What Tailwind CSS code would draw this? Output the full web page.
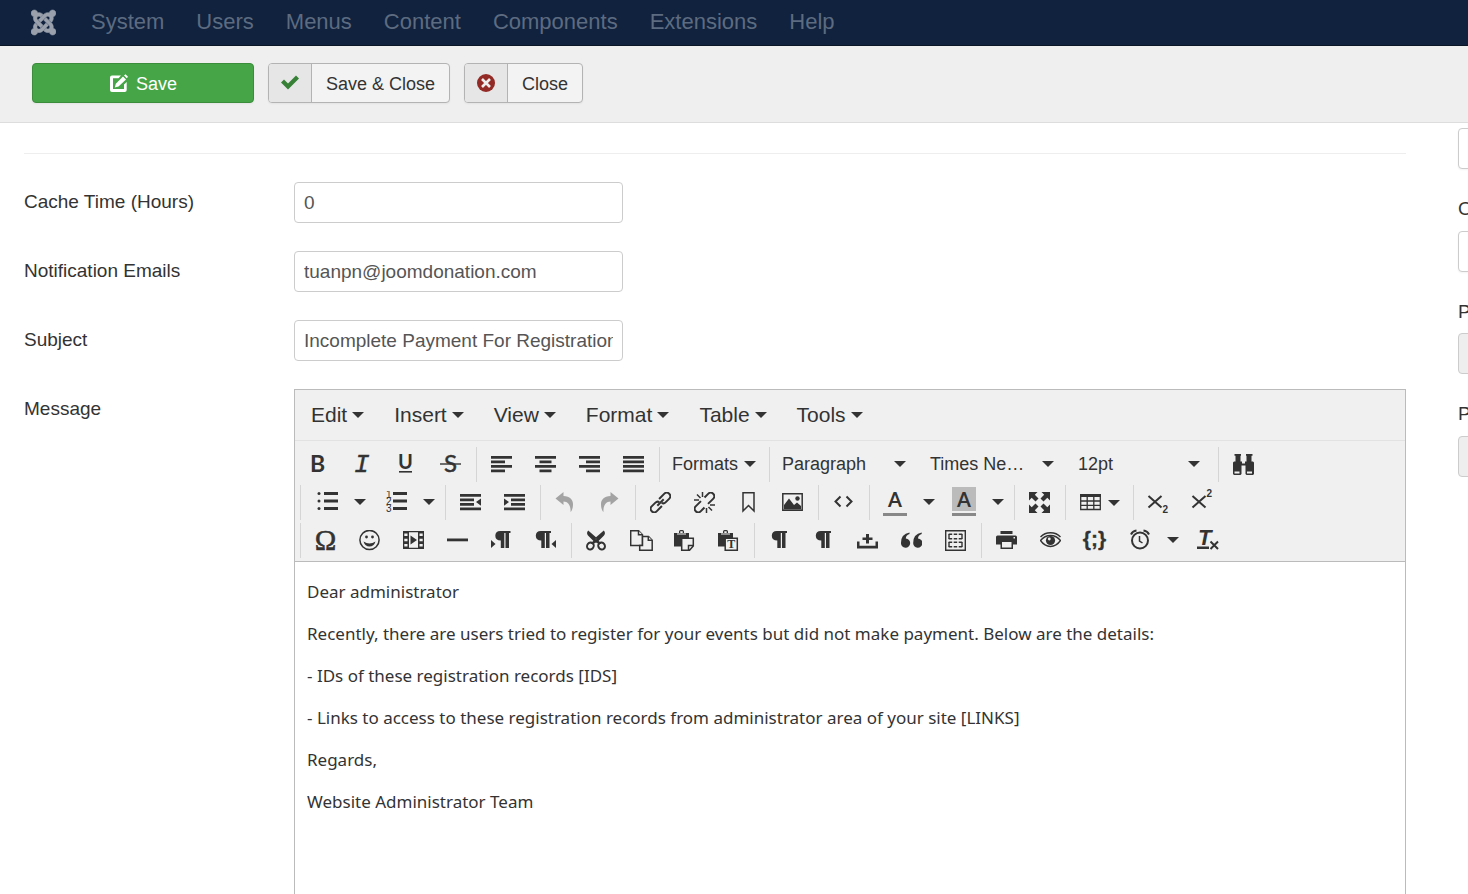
<!DOCTYPE html>
<html lang="en">
<head>
<meta charset="utf-8">
<meta name="viewport" content="width=device-width, initial-scale=1">
<title>Plugin configuration</title>
<script src="https://cdn.jsdelivr.net/npm/@tailwindcss/browser@4"></script>
</head>
<body class="h-screen overflow-hidden bg-white font-['Liberation_Sans',Arial,sans-serif] text-[#333]">

<!-- Editor icon set, drawn on a 21 unit grid -->
<svg class="hidden" aria-hidden="true">
  <symbol id="caret" viewBox="0 0 12 6"><path d="M0 0H12L6 6Z"/></symbol>
  <symbol id="bold" viewBox="0 0 21 21"><text x="2" y="18" font-family="Lato" font-weight="700" font-size="23">B</text></symbol>
  <symbol id="italic" viewBox="0 0 21 21"><text x="2" y="18" font-family="Liberation Mono" font-weight="400" font-style="italic" font-size="26" stroke="currentColor" stroke-width=".4">I</text></symbol>
  <symbol id="underline" viewBox="0 0 21 21"><text x="2" y="15" font-family="Lato" font-weight="700" font-size="20">U</text><path d="M3 17H16V18.6H3Z"/></symbol>
  <symbol id="strike" viewBox="0 0 21 21"><text x="4" y="18" font-family="Lato" font-weight="400" font-size="24" stroke="currentColor" stroke-width=".5">S</text><path d="M0 9.300H21V10.700H0Z"/></symbol>
  <symbol id="al" viewBox="0 0 21 21"><path d="M0 2H21V4.8H0ZM0 6.5H14V9.3H0ZM0 11H21V13.8H0ZM0 15.5H14V18.3H0Z"/></symbol>
  <symbol id="ac" viewBox="0 0 21 21"><path d="M0 2H21V4.8H0ZM4.5 6.5H16.5V9.3H4.5ZM0 11H21V13.8H0ZM4.5 15.5H16.5V18.3H4.5Z"/></symbol>
  <symbol id="ar" viewBox="0 0 21 21"><path d="M0 2H21V4.8H0ZM7 6.5H21V9.3H7ZM0 11H21V13.8H0ZM7 15.5H21V18.3H7Z"/></symbol>
  <symbol id="aj" viewBox="0 0 21 21"><path d="M0 2H21V4.8H0ZM0 6.5H21V9.3H0ZM0 11H21V13.8H0ZM0 15.5H21V18.3H0Z"/></symbol>
  <symbol id="find" viewBox="0 0 21 21"><path d="M1.500 0H8V1.700H7.500V7.500H9V9.500H12V7.500H13.500V1.700H13V0H19.500V1.700H18.500V7.500H20L21 8.500V20L20 21H13.500L12.500 20V11.500H8.500V20L7.500 21H1L0 20V8.500L1 7.500H2.500V1.700H1.500Z"/><path fill="#f0f0f0" d="M1.500 17.500H6.500V19.500H1.500ZM14 17.500H19V19.500H14Z"/></symbol>
  <symbol id="ul" viewBox="0 0 21 21"><path d="M7 1H21V4H7ZM7 8.5H21V11.5H7ZM7 16H21V19H7Z"/><circle cx="2" cy="2.5" r="1.5"/><circle cx="2" cy="10" r="1.5"/><circle cx="2" cy="17.5" r="1.5"/></symbol>
  <symbol id="ol" viewBox="0 0 21 21"><path d="M7 1H21V4H7ZM7 8.5H21V11.5H7ZM7 16H21V19H7Z"/><g font-family="Liberation Sans" font-weight="400" font-size="10"><text x="0" y="6.500">1</text><text x="0" y="13.500">2</text><text x="0" y="20.500">3</text></g></symbol>
  <symbol id="outdent" viewBox="0 0 21 21"><path d="M0 2H21V4.8H0ZM0 6.5H14V9.3H0ZM0 11H14V13.8H0ZM0 15.5H21V18.3H0ZM21 6.500V13.800L16 10.1Z"/></symbol>
  <symbol id="indent" viewBox="0 0 21 21"><path d="M0 2H21V4.8H0ZM7 6.5H21V9.3H7ZM7 11H21V13.8H7ZM0 15.5H21V18.3H0ZM0 6.500V13.800L5 10.1Z"/></symbol>
  <symbol id="undo" viewBox="0 0 21 21"><path d="M.5 6.500L8.500 0V4C15 4 18 8 18 12C18 15 17.500 18 15.500 20C16 13.500 13 9.500 8.500 9.500V13Z"/></symbol>
  <symbol id="redo" viewBox="0 0 21 21"><path d="M19.500 6.500L11.500 0V4C5 4 2 8 2 12C2 15 2.500 18 4.500 20C4 13.500 7 9.500 11.500 9.500V13Z"/></symbol>
  <symbol id="link" viewBox="0 0 21 21"><g fill="none" stroke="currentColor" stroke-width="2" transform="rotate(-45 10.500 10.500)"><path d="M9 14H1.500Q-1.800 14 -1.800 10.500Q-1.800 7 1.500 7H6.500Q9.500 7 9.800 9.500M12 7H19.500Q22.800 7 22.800 10.500Q22.800 14 19.500 14H14.500Q11.500 14 11.200 11.500"/><path d="M6 10.500H15"/></g></symbol>
  <symbol id="unlink" viewBox="0 0 21 21"><g fill="none" stroke="currentColor" stroke-width="2" transform="rotate(-45 10.500 10.500)"><path d="M7 14H1.500Q-1.800 14 -1.800 10.500Q-1.800 7 1.500 7H9M12 14H19.500Q22.800 14 22.800 10.500Q22.800 7 19.500 7H14"/></g><path fill="none" stroke="currentColor" stroke-width="1.500" d="M8.500 0V5M3 2.500L6.500 6M0 8H5M12.500 21V16M18 18.500L14.500 15M21 13H16"/></symbol>
  <symbol id="bookmark" viewBox="0 0 21 21"><path fill="none" stroke="currentColor" stroke-width="1.500" d="M5 .8H16V19L10.500 13.500L5 19Z"/></symbol>
  <symbol id="image" viewBox="0 0 21 21"><path fill="none" stroke="currentColor" stroke-width="1.500" d="M.8 1.800H20.200V18.200H.8Z"/><path d="M2 17.500V13L7 6.500L12 13L15 10.500L19 14V17.500Z"/><circle cx="15.500" cy="6.500" r="2.200"/></symbol>
  <symbol id="code" viewBox="0 0 21 21"><path fill="none" stroke="currentColor" stroke-width="2" d="M7.500 4.500L2.500 9.500L7.500 14.500M13.500 4.500L18.500 9.500L13.500 14.500"/></symbol>
  <symbol id="full" viewBox="0 0 21 21"><path d="M0 0H8.500L5.800 2.700L9.500 6.500L6.500 9.500L2.700 5.800L0 8.500ZM21 0V8.500L18.300 5.800L14.500 9.500L11.500 6.500L15.200 2.700L12.500 0ZM0 21V12.500L2.700 15.200L6.500 11.500L9.500 14.500L5.800 18.300L8.500 21ZM21 21H12.500L15.200 18.300L11.500 14.500L14.500 11.500L18.300 15.200L21 12.500Z"/></symbol>
  <symbol id="table" viewBox="0 0 21 21"><path d="M0 2H21V5H0Z"/><path fill="none" stroke="currentColor" stroke-width="1.300" d="M.7 4V17.500H20.300V4M.7 9H20.300M.7 13.300H20.300M7.200 4V18M13.800 4V18"/></symbol>
  <symbol id="sub" viewBox="0 0 21 21" overflow="visible"><path fill="none" stroke="currentColor" stroke-width="2" d="M.5 4L13.500 15.500M13.500 4L.5 15.500"/><text x="14.500" y="21" font-family="Liberation Sans" font-weight="700" font-size="10">2</text></symbol>
  <symbol id="sup" viewBox="0 0 21 21" overflow="visible"><path fill="none" stroke="currentColor" stroke-width="2" d="M.5 4L13.500 15.500M13.500 4L.5 15.500"/><text x="14.500" y="5" font-family="Liberation Sans" font-weight="700" font-size="10">2</text></symbol>
  <symbol id="omega" viewBox="0 0 21 21" overflow="visible"><text x="10.500" y="19.500" text-anchor="middle" font-family="Liberation Serif" font-size="29" stroke="currentColor" stroke-width=".5">Ω</text></symbol>
  <symbol id="smile" viewBox="0 0 21 21"><circle cx="10.500" cy="10" r="9.600" fill="none" stroke="currentColor" stroke-width="1.500"/><circle cx="7.500" cy="7" r="1.400"/><circle cx="13.500" cy="7" r="1.400"/><path d="M4.500 11.500Q10.500 15.500 16.500 11.500Q15 16.500 10.500 16.500Q6 16.500 4.500 11.500Z"/></symbol>
  <symbol id="media" viewBox="0 0 21 21"><path fill-rule="evenodd" d="M0 1H21V19H0ZM6 2.300V17.700H15V2.300ZM1.300 3.500V6H4.500V3.500ZM1.300 8.700V11.300H4.500V8.700ZM1.300 14V16.500H4.500V14ZM16.500 3.500V6H19.700V3.500ZM16.500 8.700V11.300H19.700V8.700ZM16.500 14V16.500H19.700V14ZM7.500 5.500L14 10L7.500 14.500Z"/></symbol>
  <symbol id="rule" viewBox="0 0 21 21"><path d="M0 8.500H21V11.300H0Z"/></symbol>
  <symbol id="mark" viewBox="0 0 21 21"><path d="M7.800 1H18V3H16.500V18H13V3H11.800V18H8.300V10.500Q2.800 10.500 2.800 5.800Q2.800 1 7.800 1Z"/></symbol>
  <symbol id="ltr" viewBox="0 0 21 21"><path d="M9.300 1H19.500V3H18V18H14.500V3H13.300V18H9.800V10.500Q4.300 10.500 4.300 5.800Q4.300 1 9.300 1ZM0 10L4.500 14L0 18Z"/></symbol>
  <symbol id="rtl" viewBox="0 0 21 21"><path d="M5.800 1H16V3H14.500V18H11V3H9.800V18H6.300V10.500Q.8 10.500 .8 5.800Q.8 1 5.800 1ZM21 10L16.500 14L21 18Z"/></symbol>
  <symbol id="cut" viewBox="0 0 21 21"><path d="M2.200 .5L10 7.200L17.800 .5Q20 3 18 5.500L12.500 11L10 13L7.500 11L2 5.500Q0 3 2.200 .5Z"/><circle cx="10" cy="9.800" r="1" fill="#f0f0f0"/><path d="M10 8.500L15.500 13.500L13 14.500L10 12L7 14.500L4.500 13.500Z"/><g fill="none" stroke="currentColor" stroke-width="2"><ellipse cx="4.400" cy="16" rx="3.200" ry="3.600" transform="rotate(40 4.400 16)"/><ellipse cx="15.600" cy="16" rx="3.200" ry="3.600" transform="rotate(-40 15.600 16)"/></g></symbol>
  <symbol id="copy" viewBox="0 0 23 21"><g fill="#f0f0f0" stroke="currentColor" stroke-width="1.500"><path d="M.7 .7H8.500L12.500 4.700V15.500H.7Z"/><path d="M8.500 .7V4.700H12.500"/><path d="M12.500 6.500H18.500L22.200 10.200V20.300H9.700V15.500H12.500Z"/><path d="M18.300 6.500V10.300H22.200"/></g></symbol>
  <symbol id="paste" viewBox="0 0 21 21"><path d="M0 3H15V8H7V16.500H0ZM5 1.500Q5 0 6.500 0H8.500Q10 0 10 1.500V3H5Z"/><path fill="#f0f0f0" d="M6.300 1.300H8.700V3H6.300ZM3 3.500H12V4.500H3Z"/><path fill="#f0f0f0" stroke="currentColor" stroke-width="1.500" d="M7.700 8.200H19.300V16L15.500 20.300H7.700ZM14.500 20V15.500H19"/></symbol>
  <symbol id="pastetext" viewBox="0 0 21 21"><path d="M0 3H15V8H7V16.500H0ZM5 1.500Q5 0 6.500 0H8.500Q10 0 10 1.500V3H5Z"/><path fill="#f0f0f0" d="M6.300 1.300H8.700V3H6.300ZM3 3.500H12V4.500H3Z"/><path fill="#f0f0f0" stroke="currentColor" stroke-width="1.500" d="M7.200 8.200H19.300V20.300H7.200Z"/><text x="13.300" y="18.300" text-anchor="middle" font-family="Liberation Serif" font-weight="700" font-size="12">T</text></symbol>
  <symbol id="nbsp" viewBox="0 0 21 21"><path d="M0 11.500H2.500V15.800H18.500V11.500H21V18.500H0ZM9 4H12V7.500H15.500V10H12V13.500H9V10H5.500V7.500H9Z"/></symbol>
  <symbol id="quote" viewBox="0 0 21 21"><path d="M4.800 8.500A4.600 4.600 0 1 1 0 12.800Q0 4 8.500 2.500V4Q4.800 5 4.800 8.500Z"/><path d="M17 8.500A4.600 4.600 0 1 1 12.200 12.800Q12.200 4 20.700 2.500V4Q17 5 17 8.500Z"/></symbol>
  <symbol id="template" viewBox="0 0 21 21"><g fill="none" stroke="currentColor" stroke-width="1.400"><path d="M.7 .7H20.300V20.300H.7Z"/><path stroke-dasharray="3.500 1.500" d="M3.700 4.200H17.300M3.700 8.800H17.300M3.700 12.200H17.300M3.700 16.800H17.300"/><path d="M4 4V9M17 4V9M4 12V17M17 12V17"/></g></symbol>
  <symbol id="print" viewBox="0 0 21 21"><path fill-rule="evenodd" d="M4.500 1H16.500V4H4.500ZM1.500 5.500H19.500Q21 5.500 21 7V14.500H17V19H4.500V14.500H0V7Q0 5.500 1.500 5.500ZM6 12V17.500H15.500V12ZM17.500 7V8.500H19V7Z"/></symbol>
  <symbol id="eye" viewBox="0 0 21 21"><g fill="none" stroke="currentColor" stroke-width="1.500"><path d="M.5 10.500Q4.500 5.500 10.500 5.500Q16.500 5.500 20.500 10.500Q16.500 16.500 10.500 16.500Q4.500 16.500 .5 10.500Z"/><path d="M.5 7Q4.500 2.800 10.500 2.800Q16.500 2.800 20.500 7"/></g><circle cx="10.500" cy="10.500" r="4.600"/><circle cx="9.300" cy="9" r="1.400" fill="#f0f0f0"/></symbol>
  <symbol id="braces" viewBox="0 0 25 21"><text x="12.500" y="15.500" text-anchor="middle" font-family="Liberation Sans" font-weight="700" font-size="21" stroke="currentColor" stroke-width=".3">{;}</text></symbol>
  <symbol id="clock" viewBox="0 0 21 21"><g fill="none" stroke="currentColor" stroke-width="2"><circle cx="10" cy="11.500" r="8"/><path d="M1 5.500Q2.500 2 6.500 1.500M19 5.500Q17.500 2 13.500 1.500"/><path stroke-width="1.500" d="M9.500 7V12L12.500 14"/></g></symbol>
  <symbol id="clear" viewBox="0 0 21 21" overflow="visible"><text x="1" y="15" font-family="Liberation Sans" font-weight="700" font-style="italic" font-size="22">T</text><path d="M0 16.500H12V19H0Z"/><path fill="none" stroke="currentColor" stroke-width="2" d="M13.500 11.500L21 19M21 11.500L13.500 19"/></symbol>
</svg>

<header class="flex h-[46px] items-center border-b border-[#0a1526] bg-[#10223e] pl-[31px] text-[#5d6b80]">
  <a href="#" aria-label="Home" class="mr-[35px] block text-[#9aa1ad]">
    <svg class="h-[29px] w-[25px]" viewBox="0 0 448 512" fill="currentColor" stroke="currentColor" stroke-width="10"><path d="M.6 92.1C.6 58.8 27.4 32 60.4 32c30 0 54.5 21.9 59.2 50.2 32.6-7.6 67.1.6 96.5 30l-44.3 44.3c-20.500-20.500-42.600-16.300-55.400-3.500-14.300 14.300-14.300 37.900 0 52.200l99.500 99.500-44 44.300c-87.700-87.200-49.700-49.700-99.800-99.700-26.800-26.500-35-64.800-24.800-98.900C20.400 144.600.6 120.700.6 92.100zm129.500 116.400l44.300 44.300c10-10 89.700-89.700 99.700-99.800 14.300-14.300 37.600-14.300 51.900 0 12.800 12.800 17 35-3.500 55.400l44 44.300c31.200-31.200 38.500-67.600 28.900-101.200 29.200-4.100 51.900-29.200 51.900-59.500 0-33.200-26.800-60.100-59.800-60.100-30.300 0-55.400 22.500-59.500 51.600-33.800-9.900-71.700-1.500-98.300 25.100-18.300 19.100-71.100 71.500-99.600 99.900zm266.300 152.200c8.200-32.700-.9-68.500-26.300-93.900-11.800-12.200 5 4.700-99.500-99.700l-44.300 44.300 99.700 99.700c14.300 14.300 14.300 37.600 0 51.900-12.800 12.800-35 17-55.400-3.500l-44 44.300c27.600 30.200 68 38.800 102.700 28 5.500 27.400 29.700 48.100 58.900 48.100 33 0 59.800-26.800 59.800-60.100 0-30.200-22.500-55-51.600-59.100zm-84.300-53.100l-44-44.300c-87 86.400-50.400 50.400-99.700 99.800-14.300 14.300-37.600 14.300-51.900 0-13.100-13.400-16.900-35.300 3.200-55.400l-44-44.300c-30.200 30.200-38 65.200-29.500 98.300-26.700 6-46.200 29.900-46.200 58.200C0 453.200 26.800 480 59.800 480c28.600 0 52.500-19.800 58.600-46.700 32.700 8.200 68.500-.6 94.200-26 32.100-32 12.200-12.400 99.500-99.700z"/></svg>
  </a>
  <nav class="flex gap-8 pb-0.5 text-[22px] leading-[42px]">
    <a href="#">System</a><a href="#">Users</a><a href="#">Menus</a><a href="#">Content</a><a href="#">Components</a><a href="#">Extensions</a><a href="#">Help</a>
  </nav>
</header>

<div class="flex h-[77px] gap-[14px] border-b border-[#ddd] bg-[#efefef] pt-[17px] pl-8 text-lg">
  <button class="flex h-10 w-[222px] items-center justify-center gap-2 rounded border border-[#3b8c3b] bg-[#46a546] text-white shadow-xs">
    <svg class="size-[19px]" viewBox="0 0 19 19" fill="currentColor"><path d="M12 1.500L9.500 4.200H4V15H15V10.500L17.700 8V16Q17.700 18 15.700 18H3Q1 18 1 16V3.500Q1 1.500 3 1.500ZM14 2.500L17 5.500L9.500 12.500L5.800 13.500L6.800 9.800ZM15 1.500L16.500 .3L19 2.800L17.800 4.300Z"/></svg>
    <span class="pt-px">Save</span>
  </button>
  <button class="flex h-10 items-center overflow-hidden rounded border border-[#b3b3b3] bg-[#f3f3f3] shadow-xs">
    <span class="flex h-full w-[43px] items-center justify-center border-r border-[#b3b3b3] bg-[#e6e6e6] text-[#378137]"><svg class="size-[18px]" viewBox="0 0 18 18" fill="currentColor"><path d="M0 8.500L3 5.500L7 9.500L15 1.500L18 4.500L7 15.500Z"/></svg></span>
    <span class="px-[14px] pt-px">Save &amp; Close</span>
  </button>
  <button class="flex h-10 items-center overflow-hidden rounded border border-[#b3b3b3] bg-[#f3f3f3] shadow-xs">
    <span class="flex h-full w-[43px] items-center justify-center border-r border-[#b3b3b3] bg-[#e6e6e6]"><svg class="size-[18px]" viewBox="0 0 18 18"><circle cx="9" cy="9" r="9" fill="#942a25"/><path stroke="#eee" stroke-width="2.600" d="M5 5L13 13M13 5L5 13"/></svg></span>
    <span class="px-[14px] pt-px">Close</span>
  </button>
</div>

<main class="flex gap-[52px] overflow-hidden pl-6">
  <div class="min-w-0 flex-1">
    <hr class="mt-[30px] mb-7 border-[#eee]">
    <div class="flex flex-col gap-7 text-[19px]">
      <div class="flex">
        <label for="cache" class="w-[270px] leading-10">Cache Time (Hours)</label>
        <input id="cache" value="0" class="h-[41px] w-[329px] rounded border border-[#ccc] px-[9px] text-[#555]">
      </div>
      <div class="flex">
        <label for="emails" class="w-[270px] leading-10">Notification Emails</label>
        <input id="emails" value="tuanpn@joomdonation.com" class="h-[41px] w-[329px] rounded border border-[#ccc] px-[9px] text-[#555]">
      </div>
      <div class="flex">
        <label for="subject" class="w-[270px] leading-10">Subject</label>
        <input id="subject" value="Incomplete Payment For Registrations" class="h-[41px] w-[329px] rounded border border-[#ccc] px-[9px] text-[#555]">
      </div>
      <div class="flex">
        <span id="message-label" class="w-[270px] shrink-0 leading-10">Message</span>
        <div class="min-w-0 flex-1 border border-[#bbb] bg-[#f0f0f0] fill-current">
          <div class="flex h-[51px] items-center gap-[30px] border-b border-[#e2e2e2] pl-4 text-[21px]">
            <button class="flex items-center gap-[5px]">Edit<svg class="h-1.5 w-3"><use href="#caret"/></svg></button>
            <button class="flex items-center gap-[5px]">Insert<svg class="h-1.5 w-3"><use href="#caret"/></svg></button>
            <button class="flex items-center gap-[5px]">View<svg class="h-1.5 w-3"><use href="#caret"/></svg></button>
            <button class="flex items-center gap-[5px]">Format<svg class="h-1.5 w-3"><use href="#caret"/></svg></button>
            <button class="flex items-center gap-[5px]">Table<svg class="h-1.5 w-3"><use href="#caret"/></svg></button>
            <button class="flex items-center gap-[5px]">Tools<svg class="h-1.5 w-3"><use href="#caret"/></svg></button>
          </div>
          <div class="flex flex-col gap-[3px] border-b border-[#bbb] pt-1.5 pb-[3px] text-lg">
            <div class="flex h-[35px] pl-0.5">
              <div class="flex pr-[3px]">
                <button aria-label="Bold" class="w-11 pl-[11px]"><svg class="size-[21px]"><use href="#bold"/></svg></button>
                <button aria-label="Italic" class="w-11 pl-[11px]"><svg class="size-[21px]"><use href="#italic"/></svg></button>
                <button aria-label="Underline" class="w-11 pl-[11px]"><svg class="size-[21px]"><use href="#underline"/></svg></button>
                <button aria-label="Strikethrough" class="w-11 pl-[11px]"><svg class="size-[21px]"><use href="#strike"/></svg></button>
              </div>
              <div class="flex border-l border-[#d5d5d5] px-[3px]">
                <button aria-label="Align left" class="w-11 pl-[11px]"><svg class="size-[21px]"><use href="#al"/></svg></button>
                <button aria-label="Align center" class="w-11 pl-[11px]"><svg class="size-[21px]"><use href="#ac"/></svg></button>
                <button aria-label="Align right" class="w-11 pl-[11px]"><svg class="size-[21px]"><use href="#ar"/></svg></button>
                <button aria-label="Justify" class="w-11 pl-[11px]"><svg class="size-[21px]"><use href="#aj"/></svg></button>
              </div>
              <div class="flex border-l border-[#d5d5d5] px-[3px]">
                <button class="flex w-[103px] items-center justify-between pr-[10px] pb-0.5 pl-[9px]">Formats<svg class="h-1.5 w-3"><use href="#caret"/></svg></button>
              </div>
              <div class="flex border-l border-[#d5d5d5] px-[3px]">
                <button class="flex w-[148px] items-center justify-between pr-[15px] pb-0.5 pl-[9px]">Paragraph<svg class="h-1.5 w-3"><use href="#caret"/></svg></button>
                <button class="flex w-[148px] items-center justify-between pr-[15px] pb-0.5 pl-[9px]">Times Ne…<svg class="h-1.5 w-3"><use href="#caret"/></svg></button>
                <button class="flex w-[146px] items-center justify-between pr-[15px] pb-0.5 pl-[9px]">12pt<svg class="h-1.5 w-3"><use href="#caret"/></svg></button>
              </div>
              <div class="flex border-l border-[#d5d5d5] px-[3px]">
                <button aria-label="Find and replace" class="w-11 pl-[11px]"><svg class="size-[21px]"><use href="#find"/></svg></button>
              </div>
            </div>
            <div class="flex h-[35px] pl-[5px]">
              <div class="flex border-l border-[#d5d5d5] px-[3px]">
                <button aria-label="Bullet list" class="flex w-[69px] items-center gap-4 pb-0.5 pl-[13px]"><svg class="size-[21px]"><use href="#ul"/></svg><svg class="h-1.5 w-3"><use href="#caret"/></svg></button>
                <button aria-label="Numbered list" class="flex w-[69px] items-center gap-4 pb-0.5 pl-[13px]"><svg class="size-[21px]"><use href="#ol"/></svg><svg class="h-1.5 w-3"><use href="#caret"/></svg></button>
              </div>
              <div class="flex border-l border-[#d5d5d5] px-[3px]">
                <button aria-label="Decrease indent" class="w-11 pl-[11px]"><svg class="size-[21px]"><use href="#outdent"/></svg></button>
                <button aria-label="Increase indent" class="w-11 pl-[11px]"><svg class="size-[21px]"><use href="#indent"/></svg></button>
              </div>
              <div class="flex border-l border-[#d5d5d5] fill-[#a3a3a3] px-[3px]">
                <button aria-label="Undo" class="w-11 pl-[11px]"><svg class="size-[21px]"><use href="#undo"/></svg></button>
                <button aria-label="Redo" class="w-11 pl-[11px]"><svg class="size-[21px]"><use href="#redo"/></svg></button>
              </div>
              <div class="flex border-l border-[#d5d5d5] px-[3px]">
                <button aria-label="Link" class="w-11 pl-[11px]"><svg class="size-[21px]"><use href="#link"/></svg></button>
                <button aria-label="Remove link" class="w-11 pl-[11px]"><svg class="size-[21px]"><use href="#unlink"/></svg></button>
                <button aria-label="Anchor" class="w-11 pl-[11px]"><svg class="size-[21px]"><use href="#bookmark"/></svg></button>
                <button aria-label="Image" class="w-11 pl-[11px]"><svg class="size-[21px]"><use href="#image"/></svg></button>
              </div>
              <div class="flex border-l border-[#d5d5d5] px-[3px]">
                <button aria-label="Source code" class="w-11 pl-[11px]"><svg class="size-[21px]"><use href="#code"/></svg></button>
              </div>
              <div class="flex border-l border-[#d5d5d5] px-[3px]">
                <button aria-label="Text color" class="flex w-[69px] items-center gap-4 pb-0.5 pl-[10px]"><span class="border-b-3 border-[#888] font-bold"><span class="mb-0.5 block w-6 text-center font-['Lato',sans-serif] text-xl leading-6">A</span></span><svg class="h-1.5 w-3"><use href="#caret"/></svg></button>
                <button aria-label="Background color" class="flex w-[69px] items-center gap-4 pb-0.5 pl-[10px]"><span class="border-b-3 border-[#888] font-bold"><span class="mb-0.5 block w-6 bg-[#bbb] text-center font-['Lato',sans-serif] text-xl leading-6">A</span></span><svg class="h-1.5 w-3"><use href="#caret"/></svg></button>
              </div>
              <div class="flex border-l border-[#d5d5d5] px-[3px]">
                <button aria-label="Fullscreen" class="w-11 pl-[11px]"><svg class="size-[21px]"><use href="#full"/></svg></button>
              </div>
              <div class="flex border-l border-[#d5d5d5] px-[3px]">
                <button aria-label="Table" class="flex w-[61px] items-center gap-[7px] pl-[11px]"><svg class="size-[21px]"><use href="#table"/></svg><svg class="h-1.5 w-3"><use href="#caret"/></svg></button>
              </div>
              <div class="flex border-l border-[#d5d5d5] px-[3px]">
                <button aria-label="Subscript" class="w-11 pl-[11px]"><svg class="size-[21px] overflow-visible"><use href="#sub"/></svg></button>
                <button aria-label="Superscript" class="w-11 pl-[11px]"><svg class="size-[21px] overflow-visible"><use href="#sup"/></svg></button>
              </div>
            </div>
            <div class="flex h-[35px] pl-[5px]">
              <div class="flex border-l border-[#d5d5d5] px-[3px]">
                <button aria-label="Special character" class="w-11 pl-[11px]"><svg class="size-[21px] overflow-visible"><use href="#omega"/></svg></button>
                <button aria-label="Emoticons" class="w-11 pl-[11px]"><svg class="size-[21px]"><use href="#smile"/></svg></button>
                <button aria-label="Media" class="w-11 pl-[11px]"><svg class="size-[21px]"><use href="#media"/></svg></button>
                <button aria-label="Horizontal line" class="w-11 pl-[11px]"><svg class="size-[21px]"><use href="#rule"/></svg></button>
                <button aria-label="Left to right" class="w-11 pl-[11px]"><svg class="size-[21px]"><use href="#ltr"/></svg></button>
                <button aria-label="Right to left" class="w-11 pl-[11px]"><svg class="size-[21px]"><use href="#rtl"/></svg></button>
              </div>
              <div class="flex border-l border-[#d5d5d5] px-[3px]">
                <button aria-label="Cut" class="w-11 pl-[11px]"><svg class="size-[21px]"><use href="#cut"/></svg></button>
                <button aria-label="Copy" class="w-11 pl-[11px]"><svg class="h-[21px] w-[23px]"><use href="#copy"/></svg></button>
                <button aria-label="Paste" class="w-11 pl-[11px]"><svg class="size-[21px]"><use href="#paste"/></svg></button>
                <button aria-label="Paste as text" class="w-11 pl-[11px]"><svg class="size-[21px]"><use href="#pastetext"/></svg></button>
              </div>
              <div class="flex border-l border-[#d5d5d5] px-[3px]">
                <button aria-label="Show blocks" class="w-11 pl-[11px]"><svg class="size-[21px]"><use href="#mark"/></svg></button>
                <button aria-label="Show invisible characters" class="w-11 pl-[11px]"><svg class="size-[21px]"><use href="#mark"/></svg></button>
                <button aria-label="Nonbreaking space" class="w-11 pl-[11px]"><svg class="size-[21px]"><use href="#nbsp"/></svg></button>
                <button aria-label="Blockquote" class="w-11 pl-[11px]"><svg class="size-[21px]"><use href="#quote"/></svg></button>
                <button aria-label="Template" class="w-11 pl-[11px]"><svg class="size-[21px]"><use href="#template"/></svg></button>
              </div>
              <div class="flex border-l border-[#d5d5d5] px-[3px]">
                <button aria-label="Print" class="w-11 pl-[11px]"><svg class="size-[21px]"><use href="#print"/></svg></button>
                <button aria-label="Preview" class="w-11 pl-[11px]"><svg class="size-[21px]"><use href="#eye"/></svg></button>
                <button aria-label="Code sample" class="w-11 pl-[9px]"><svg class="h-[21px] w-[25px]"><use href="#braces"/></svg></button>
                <button aria-label="Insert date/time" class="flex w-[69px] items-center gap-4 pb-0.5 pl-[13px]"><svg class="size-[21px]"><use href="#clock"/></svg><svg class="h-1.5 w-3"><use href="#caret"/></svg></button>
                <button aria-label="Clear formatting" class="w-11 pl-[11px]"><svg class="size-[21px] overflow-visible"><use href="#clear"/></svg></button>
              </div>
            </div>
          </div>
          <div role="textbox" aria-multiline="true" aria-labelledby="message-label" contenteditable="true" class="flex min-h-[520px] flex-col gap-[18px] bg-white px-3 pt-[18px] font-['Noto_Sans',sans-serif] text-[17px] leading-6">
            <p>Dear administrator</p>
            <p>Recently, there are users tried to register for your events but did not make payment. Below are the details:</p>
            <p>- IDs of these registration records [IDS]</p>
            <p>- Links to access to these registration records from administrator area of your site [LINKS]</p>
            <p>Regards,</p>
            <p>Website Administrator Team</p>
          </div>
        </div>
      </div>
    </div>
  </div>
  <aside class="-mr-[320px] flex w-[330px] shrink-0 flex-col pt-[5px] text-[19px] leading-6">
    <select aria-label="Access" class="h-[41px] rounded border border-[#ccc] bg-white shadow-xs"><option></option></select>
    <label for="ordering" class="mt-7 mb-[10px]">Ordering</label>
    <select id="ordering" class="h-[41px] rounded border border-[#ccc] bg-white shadow-xs"><option></option></select>
    <label for="type" class="mt-7 mb-[9px]">Plugin Type</label>
    <input id="type" readonly class="h-[41px] rounded border border-[#ccc] bg-[#eee]">
    <label for="file" class="mt-7 mb-[10px]">Plugin File</label>
    <input id="file" readonly class="h-[41px] rounded border border-[#ccc] bg-[#eee]">
  </aside>
</main>
</body>
</html>
